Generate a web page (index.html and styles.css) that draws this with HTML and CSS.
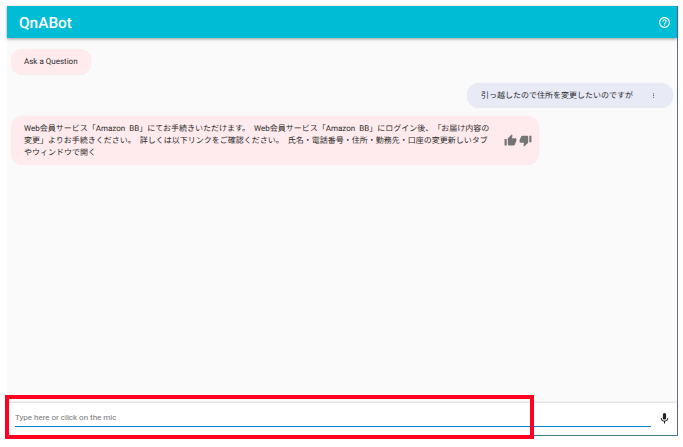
FILE: index.html
```html
<!DOCTYPE html>
<html lang="ja">
<head>
<meta charset="utf-8">
<title>QnABot</title>
<link rel="stylesheet" href="styles.css">
</head>
<body>
<div class="app">
  <header class="toolbar">
    <span class="title">QnABot</span>
    <svg class="help" viewBox="0 0 24 24"><path d="M11 18h2v-2h-2v2zm1-16C6.48 2 2 6.48 2 12s4.48 10 10 10 10-4.48 10-10S17.52 2 12 2zm0 18c-4.41 0-8-3.59-8-8s3.59-8 8-8 8 3.59 8 8-3.59 8-8 8zm0-14c-2.21 0-4 1.79-4 4h2c0-1.1.9-2 2-2s2 .9 2 2c0 2-3 1.75-3 5h2c0-2.25 3-2.5 3-5 0-2.21-1.79-4-4-4z"/></svg>
  </header>
  <main class="chat">
    <div class="bubble bot ask">Ask a Question</div>
    <div class="bubble user">
      <span>引っ越したので住所を変更したいのですが</span>
      <svg class="kebab" viewBox="0 0 24 24"><path d="M12 8c1.1 0 2-.9 2-2s-.9-2-2-2-2 .9-2 2 .9 2 2 2zm0 2c-1.1 0-2 .9-2 2s.9 2 2 2 2-.9 2-2-.9-2-2-2zm0 6c-1.1 0-2 .9-2 2s.9 2 2 2 2-.9 2-2-.9-2-2-2z"/></svg>
    </div>
    <div class="bubble bot answer">
      <p class="answer-text">Web会員サービス「Amazon BB」にてお手続きいただけます。 Web会員サービス「Amazon BB」にログイン後、「お届け内容の<br>変更」よりお手続きください。 詳しくは以下リンクをご確認ください。 氏名・電話番号・住所・勤務先・口座の変更新しいタブ<br>やウィンドウで開く</p>
      <div class="thumbs">
        <svg class="thumb" viewBox="0 0 24 24"><path d="M1 21h4V9H1v12zm22-11c0-1.1-.9-2-2-2h-6.31l.95-4.57.03-.32c0-.41-.17-.79-.44-1.06L14.17 1 7.59 7.59C7.22 7.95 7 8.45 7 9v10c0 1.1.9 2 2 2h9c.83 0 1.54-.5 1.84-1.22l3.02-7.05c.09-.23.14-.47.14-.73v-2z"/></svg>
        <svg class="thumb" viewBox="0 0 24 24"><path d="M15 3H6c-.83 0-1.54.5-1.84 1.22l-3.02 7.05c-.09.23-.14.47-.14.73v2c0 1.1.9 2 2 2h6.31l-.95 4.57-.03.32c0 .41.17.79.44 1.06L9.83 23l6.59-6.59c.36-.36.58-.86.58-1.41V5c0-1.1-.9-2-2-2zm4 0v12h4V3h-4z"/></svg>
      </div>
    </div>
  </main>
  <footer class="inputbar">
    <input class="field" type="text" placeholder="Type here or click on the mic">
    <svg class="mic" viewBox="0 0 24 24"><path d="M12 14c1.66 0 2.99-1.34 2.99-3L15 5c0-1.66-1.34-3-3-3S9 3.34 9 5v6c0 1.66 1.34 3 3 3zm5.3-3c0 3-2.54 5.1-5.3 5.1S6.7 14 6.7 11H5c0 3.41 2.72 6.23 6 6.72V21h2v-3.28c3.28-.48 6-3.3 6-6.72h-1.7z"/></svg>
  </footer>
</div>
<div class="highlight"></div>
</body>
</html>
```
FILE: styles.css
```css
html, body {
  margin: 0;
  padding: 0;
  background: #fff;
  height: 100%;
  overflow: hidden;
}
body {
  padding: 6px 0 0 7px;
  box-sizing: border-box;
  font-family: Roboto, "Noto Sans CJK JP", sans-serif;
  font-size: 8px;
  line-height: 12px;
  color: #2b2b2b;
  text-rendering: geometricPrecision;
  text-spacing-trim: space-all;
  font-feature-settings: "palt" 0, "chws" 0;
}
.app {
  width: 671px;
  height: 430px;
  box-sizing: border-box;
  display: flex;
  flex-direction: column;
  background: #fafafa;
  border-right: 1px solid #5f6a9a;
  border-bottom: 1px solid #3f7f8c;
}
.toolbar {
  flex: none;
  height: 32px;
  display: flex;
  align-items: center;
  justify-content: space-between;
  padding: 1px 6px 0 12px;
  box-sizing: border-box;
  background: #00bcd4;
  color: #fff;
  box-shadow: 0 1px 3px rgba(0, 0, 0, 0.4);
  position: relative;
}
.title {
  font-size: 15.4px;
  font-weight: 500;
}
.help {
  width: 13px;
  height: 13px;
  fill: #fff;
}
.chat {
  flex: 1;
  display: flex;
  flex-direction: column;
  align-items: flex-start;
  padding: 11px 4px 0 4px;
}
.bubble {
  box-sizing: border-box;
  border-radius: 12px;
  display: flex;
  align-items: center;
  box-shadow: 0 0 1px rgba(0, 0, 0, 0.08);
}
.bot {
  background: #ffebee;
}
.ask {
  width: 80px;
  height: 26px;
  padding-left: 13px;
}
.user {
  align-self: flex-end;
  width: 206px;
  height: 25px;
  margin-top: 8px;
  padding-left: 14px;
  background: #e8eaf6;
  justify-content: flex-start;
}
.kebab {
  width: 7px;
  height: 7px;
  margin-left: 17px;
  fill: #444;
}
.answer {
  width: 528px;
  height: 49px;
  margin-top: 8px;
  padding-left: 13px;
}
.answer-text {
  margin: 0;
  width: 480px;
  flex: none;
  white-space: nowrap;
  word-spacing: 2px;
}
.thumbs {
  display: flex;
  gap: 2px;
}
.thumb {
  width: 13px;
  height: 13px;
  fill: #757575;
}
.inputbar {
  flex: none;
  height: 32px;
  box-sizing: border-box;
  display: flex;
  align-items: center;
  background: #fff;
  padding: 0 6px 0 8px;
  box-shadow: 0 -1px 2px rgba(0, 0, 0, 0.12);
  position: relative;
}
.field {
  flex: 1;
  min-width: 0;
  height: 17px;
  margin-top: -2px;
  padding: 0;
  border: 0;
  border-bottom: 1px solid #0288d1;
  outline: 0;
  background: transparent;
  font: inherit;
}
.field::placeholder {
  color: #757575;
  opacity: 1;
}
.mic {
  width: 13px;
  height: 13px;
  margin: -2px 0 0 7px;
  fill: #212121;
}
.highlight {
  position: absolute;
  left: 5px;
  top: 395px;
  width: 529px;
  height: 44px;
  box-sizing: border-box;
  border: 4px solid #ff0022;
}
```
